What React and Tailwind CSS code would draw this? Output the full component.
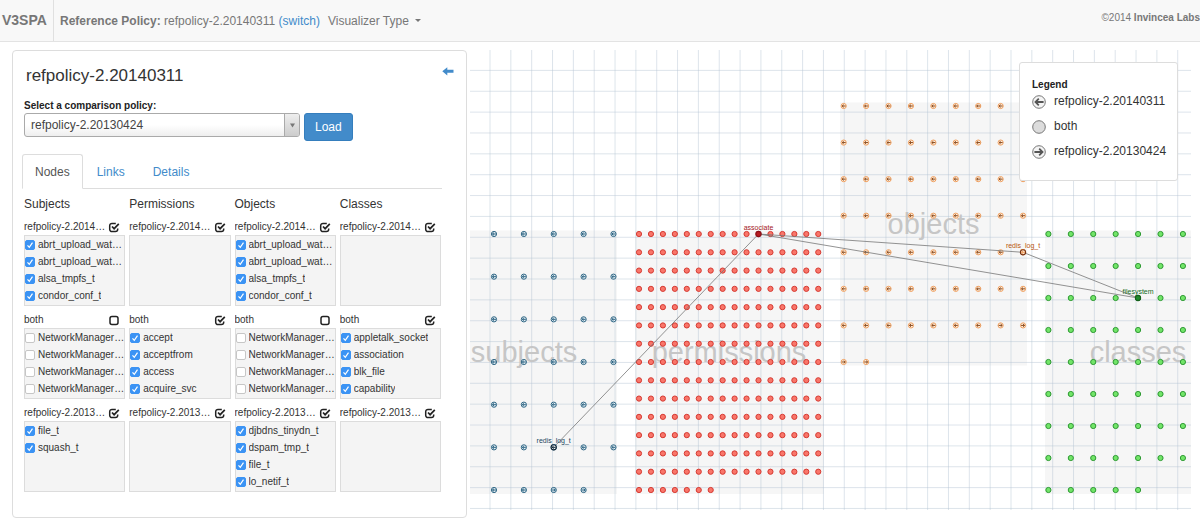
import React from "react";

const COLUMNS = [
  {
    title: "Subjects",
    groups: [
      { name: "refpolicy-2.20140311", on: true, items: ["abrt_upload_watch_t", "abrt_upload_watch_tmp_t", "alsa_tmpfs_t", "condor_conf_t"] },
      { name: "both", on: false, items: ["NetworkManager_etc_rw_t", "NetworkManager_etc_t", "NetworkManager_exec_t", "NetworkManager_log_t"] },
      { name: "refpolicy-2.20130424", on: true, items: ["file_t", "squash_t"] },
    ],
  },
  {
    title: "Permissions",
    groups: [
      { name: "refpolicy-2.20140311", on: true, items: [] },
      { name: "both", on: true, items: ["accept", "acceptfrom", "access", "acquire_svc"] },
      { name: "refpolicy-2.20130424", on: true, items: [] },
    ],
  },
  {
    title: "Objects",
    groups: [
      { name: "refpolicy-2.20140311", on: true, items: ["abrt_upload_watch_t", "abrt_upload_watch_tmp_t", "alsa_tmpfs_t", "condor_conf_t"] },
      { name: "both", on: false, items: ["NetworkManager_etc_rw_t", "NetworkManager_etc_t", "NetworkManager_exec_t", "NetworkManager_log_t"] },
      { name: "refpolicy-2.20130424", on: true, items: ["djbdns_tinydn_t", "dspam_tmp_t", "file_t", "lo_netif_t"] },
    ],
  },
  {
    title: "Classes",
    groups: [
      { name: "refpolicy-2.20140311", on: true, items: [] },
      { name: "both", on: true, items: ["appletalk_socket", "association", "blk_file", "capability"] },
      { name: "refpolicy-2.20130424", on: true, items: [] },
    ],
  },
];

function ToggleIcon({ on }) {
  return (
    <svg viewBox="0 0 12 12" className="size-3" fill="none" stroke="#222" strokeWidth="1.5" aria-hidden="true">
      {on ? (
        <>
          <path d="M7.800 2.400H4A2.300 2.300 0 0 0 1.700 4.700V8.300A2.300 2.300 0 0 0 4 10.600H7.400A2.300 2.300 0 0 0 9.700 8.300V7.600" />
          <path d="M4 5.500 6.100 7.700 10.800 2.800" strokeWidth="1.700" />
        </>
      ) : (
        <rect x="2" y="2.400" width="8" height="8.200" rx="2" />
      )}
    </svg>
  );
}

function Group({ group }) {
  return (
    <section className="min-w-0">
      <div className="flex h-4 items-center justify-between pr-[5px]">
        <h3 className="w-[82px] truncate">{group.name}</h3>
        <button type="button" aria-label={"Toggle all in " + group.name}>
          <ToggleIcon on={group.on} />
        </button>
      </div>
      <div className="grid h-[71px] grid-rows-4 border border-[#dcdcdc] bg-[#f4f4f4]">
        {group.items.map((item) => (
          <label key={item} className="flex min-w-0 items-center gap-[3px]">
            <span className="grid size-[10px] shrink-0">
              <input
                type="checkbox"
                defaultChecked={group.on}
                className="peer col-start-1 row-start-1 size-[10px] appearance-none rounded-[2px] border border-[#c6c6c6] bg-white checked:border-[#3b93f4] checked:bg-[#3b93f4]"
              />
              <svg viewBox="0 0 10 10" className="pointer-events-none col-start-1 row-start-1 hidden size-[10px] peer-checked:block" fill="none" stroke="#fff" strokeWidth="1.200" aria-hidden="true">
                <path d="M2.500 5.300 4.300 7.300 7.500 2.700" />
              </svg>
            </span>
            <span className="truncate">{item}</span>
          </label>
        ))}
      </div>
    </section>
  );
}

const KINDS = {
  subjects: { x: 494, y: 234, dx: 29.87, dy: 42.67, cols: 5, count: 34, rightFrom: 32, ring: "#2f6684", fill: "#e6f0f6", arrow: "#2f6684", box: [470, 230.5, 147, 263.5], label: [524, 362] },
  permissions: { x: 639, y: 234, dx: 11.95, dy: 18.286, cols: 16, count: 231, ring: "#d63a32", fill: "#f9766a", box: [635, 230.5, 189, 263.5], label: [729, 362] },
  objects: { x: 843.7, y: 106, dx: 22.42, dy: 36.57, cols: 9, count: 65, rightFrom: 61, ring: "#f0a060", fill: "#fff0e0", arrow: "#8a4a1c", box: [840, 102.5, 187, 263], label: [933.5, 234] },
  classes: { x: 1048.4, y: 234, dx: 22.42, dy: 32, cols: 7, count: 61, ring: "#2f9a34", fill: "#72e568", box: [1045, 230.5, 146, 263.5], label: [1138, 362] },
};

const PICKED = [
  { kind: "subjects", text: "redis_log_t", x: 553.7, y: 447.3, ring: "#0b2233", fill: "#ffffff", color: "#1d4763", arrow: "#0b2233" },
  { kind: "permissions", text: "associate", x: 758.5, y: 234, ring: "#8b1018", fill: "#b81c22", color: "#a3151c" },
  { kind: "objects", text: "redis_log_t", x: 1023, y: 252.3, ring: "#7a3410", fill: "#ffe6cf", color: "#b8560f", arrow: "#f0a060" },
  { kind: "classes", text: "filesystem", x: 1138, y: 298, ring: "#14601b", fill: "#1f8a2a", color: "#146b1c" },
];

const LINKS = [
  [1, 0],
  [1, 2],
  [1, 3],
  [2, 3],
];

function Arrow({ x, y, right, color }) {
  const s = right ? 1 : -1;
  return (
    <path
      d="M-2 0H1.500M0 -1.300 1.600 0 0 1.300"
      transform={`translate(${x} ${y}) scale(${s} 1)`}
      stroke={color}
      strokeWidth="1"
      fill="none"
    />
  );
}

function Nodes({ kind }) {
  const k = KINDS[kind];
  return (
    <g>
      {Array.from({ length: k.count }, (_, i) => {
        const x = k.x + (i % k.cols) * k.dx;
        const y = k.y + Math.floor(i / k.cols) * k.dy;
        return (
          <g key={i}>
            <circle cx={x} cy={y} r="2.600" fill={k.fill} stroke={k.ring} strokeWidth="1" />
            {k.arrow && <Arrow x={x} y={y} right={i >= k.rightFrom} color={k.arrow} />}
          </g>
        );
      })}
    </g>
  );
}

function Graph() {
  const names = Object.keys(KINDS);
  return (
    <svg viewBox="470 42 730 480" className="block w-full" role="img" aria-label="Policy graph">
      {names.map((n) => {
        const [x, y, w, h] = KINDS[n].box;
        return <rect key={n} x={x} y={y} width={w} height={h} fill="#f6f6f6" />;
      })}
      <g stroke="#b4c3d2" strokeOpacity="0.45" strokeWidth="1">
        {Array.from({ length: 34 }, (_, i) => (
          <line key={i} x1={490 + i * 20.84} x2={490 + i * 20.84} y1="50" y2="510" />
        ))}
        {Array.from({ length: 22 }, (_, i) => (
          <line key={i} x1="470" x2="1191" y1={70.4 + i * 20.86} y2={70.4 + i * 20.86} />
        ))}
      </g>
      <g fontSize="29" fill="#c6c6c6" textAnchor="middle">
        {names.map((n) => (
          <text key={n} x={KINDS[n].label[0]} y={KINDS[n].label[1]}>{n}</text>
        ))}
      </g>
      {names.map((n) => (
        <Nodes key={n} kind={n} />
      ))}
      <g stroke="#777" strokeWidth="0.800">
        {LINKS.map(([a, b]) => (
          <line key={a + "-" + b} x1={PICKED[a].x} y1={PICKED[a].y} x2={PICKED[b].x} y2={PICKED[b].y} />
        ))}
      </g>
      {PICKED.map((p) => (
        <g key={p.kind}>
          <circle cx={p.x} cy={p.y} r="2.600" fill={p.fill} stroke={p.ring} strokeWidth="1.100" />
          {p.arrow && <Arrow x={p.x} y={p.y} color={p.arrow} />}
          <text x={p.x} y={p.y - 4} fontSize="7" textAnchor="middle" fill={p.color}>{p.text}</text>
        </g>
      ))}
    </svg>
  );
}

function LegendIcon({ type }) {
  return (
    <svg viewBox="0 0 14 14" className="size-[14px] shrink-0" aria-hidden="true">
      <circle cx="7" cy="7" r="6.300" fill={type === "both" ? "#dcdcdc" : "#f4f4f4"} stroke="#777" strokeWidth="1" />
      {type === "left" && <path d="M2.200 7 6.200 3 7.400 4.200 5.800 5.900H11.600V8.100H5.800L7.400 9.800 6.200 11Z" fill="#555" />}
      {type === "right" && <path d="M11.800 7 7.800 3 6.600 4.200 8.200 5.900H2.400V8.100H8.200L6.600 9.800 7.800 11Z" fill="#555" />}
    </svg>
  );
}

function Legend() {
  const rows = [
    ["left", "refpolicy-2.20140311"],
    ["both", "both"],
    ["right", "refpolicy-2.20130424"],
  ];
  return (
    <aside className="absolute top-5 right-[22px] w-[159px] rounded-[3px] border border-[#ddd] bg-white pt-4 pb-4 pl-3 text-[#333]">
      <h2 className="h-[10px] text-[10px] leading-[12px] font-bold text-[#222]">Legend</h2>
      <ul className="text-[12px] leading-[25px] whitespace-nowrap">
        {rows.map(([type, text]) => (
          <li key={type} className="flex h-[25px] items-center gap-2">
            <LegendIcon type={type} />
            {text}
          </li>
        ))}
      </ul>
    </aside>
  );
}

export default function App() {
  return (
    <div className="min-h-screen bg-white font-['Liberation_Sans',Arial,sans-serif] text-[#333]">
      <header className="flex h-[42px] items-center border-b border-[#e3e3e3] bg-[#f8f8f8] text-[12px] text-[#777]">
        <a href="#home" className="flex h-full w-[54px] items-center border-r border-[#e0e0e0] pl-[2px] text-[14px] font-bold">V3SPA</a>
        <p className="pl-[6px] whitespace-nowrap">
          <b>Reference Policy:</b> refpolicy-2.20140311{" "}
          <a href="#switch" className="text-[#428bca]">(switch)</a>
        </p>
        <button type="button" className="ml-2 flex items-center gap-[6px] whitespace-nowrap">
          Visualizer Type
          <svg viewBox="0 0 6 3" className="h-[3px] w-[6px]" aria-hidden="true">
            <path d="M0 0H6L3 3Z" fill="#777" />
          </svg>
        </button>
        <p className="ml-auto pb-[6px] text-[10px] whitespace-nowrap">
          ©2014 <b>Invincea Labs</b>
        </p>
      </header>

      <main className="flex items-start gap-[3px]">
        <div className="w-[467px] shrink-0 pt-2 pl-3">
          <div className="rounded-[4px] border border-[#ddd] bg-white pr-[25px] pb-[25px] pl-[11px]">
            <div className="-mr-[13px] flex items-start justify-between pt-[14px]">
              <h1 className="pl-[2px] text-[17px] leading-[22px]">refpolicy-2.20140311</h1>
              <button type="button" aria-label="Collapse panel" className="block">
                <svg viewBox="0 0 12 12" className="size-3" aria-hidden="true">
                  <path d="M0.300 6.300 5.300 2.200V4.800H11.500V7.800H5.300V10.400Z" fill="#428bca" />
                </svg>
              </button>
            </div>
            <label htmlFor="policy" className="mt-3 block text-[10px] leading-[14px] font-bold text-[#222]">Select a comparison policy:</label>
            <div className="flex items-start gap-1">
              <div className="grid w-[276px]">
                <select id="policy" className="col-start-1 row-start-1 h-6 appearance-none rounded-[3px] border border-[#aaa] bg-linear-to-b from-white from-50% to-[#eee] pl-[6px] text-[12px] text-[#444]">
                  <option>refpolicy-2.20130424</option>
                </select>
                <span className="pointer-events-none col-start-1 row-start-1 m-px flex w-[15px] items-center justify-center justify-self-end rounded-r-[2px] border-l border-[#aaa] bg-linear-to-b from-[#eee] to-[#ccc]">
                  <svg viewBox="0 0 5 5" className="size-[5px]" aria-hidden="true">
                    <path d="M0 0.500H5L2.500 4.500Z" fill="#777" />
                  </svg>
                </span>
              </div>
              <button type="button" className="h-7 rounded-[3px] border border-[#357ebd] bg-[#428bca] px-[10px] text-[12px] text-white">Load</button>
            </div>

            <nav className="mt-[13px] -mr-px -ml-[2px] flex h-[35px] border-b border-[#ddd] text-[12px] text-[#428bca]">
              <a href="#nodes" className="-mb-px flex items-center rounded-t-[3px] border border-[#ddd] border-b-white bg-white px-3 text-[#555]">Nodes</a>
              <a href="#links" className="flex items-center pt-px pr-[14px] pl-[14px]">Links</a>
              <a href="#details" className="flex items-center px-[14px] pt-px">Details</a>
            </nav>

            <div className="mt-[7px] grid grid-cols-4 gap-x-1">
              {COLUMNS.map((col) => (
                <div key={col.title} className="min-w-0 text-[10px] leading-[14px]">
                  <h2 className="text-[12px] leading-[16px]">{col.title}</h2>
                  <div className="mt-[7px] grid gap-[6px]">
                    {col.groups.map((g, i) => (
                      <Group key={i} group={g} />
                    ))}
                  </div>
                </div>
              ))}
            </div>
          </div>
        </div>

        <div className="relative min-w-0 flex-1">
          <Graph />
          <Legend />
        </div>
      </main>
    </div>
  );
}
